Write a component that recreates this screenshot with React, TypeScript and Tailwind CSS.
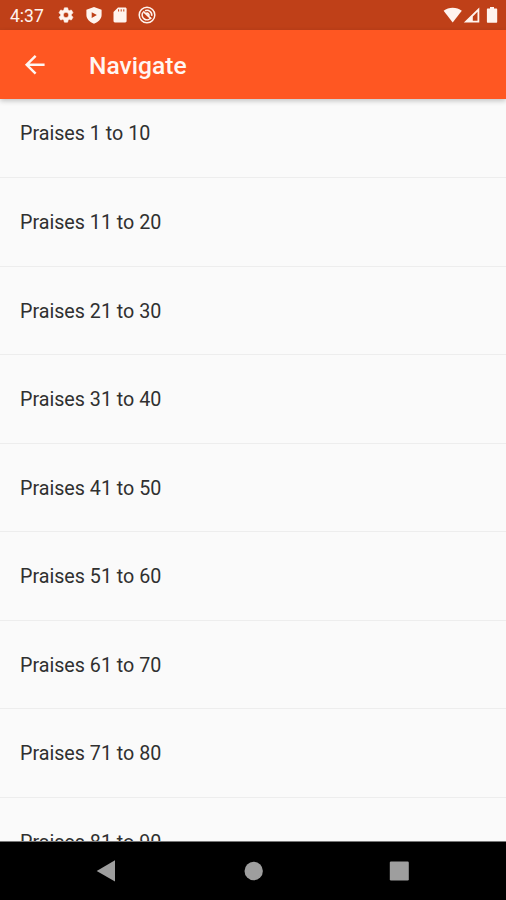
import { MdArrowBack } from "react-icons/md";

const praises = Array.from({ length: 9 }, (_, i) => {
  return `Praises ${i * 10 + 1} to ${i * 10 + 10}`;
});

function GearIcon() {
  return (
    <svg
      className="size-[18px]"
      viewBox="0 0 24 24"
      fill="currentColor"
      stroke="currentColor"
      strokeWidth=".8"
    >
      <path d="M19.140 12.940c.040-.300.060-.610.060-.940 0-.320-.020-.640-.070-.940l2.030-1.580c.180-.140.230-.410.120-.610l-1.920-3.320c-.120-.220-.370-.290-.590-.220l-2.390.960c-.500-.380-1.030-.700-1.620-.940l-.360-2.540c-.040-.240-.240-.410-.480-.410h-3.840c-.240 0-.430.170-.470.410l-.360 2.540c-.590.240-1.130.570-1.620.940l-2.390-.960c-.220-.080-.470 0-.590.220L2.740 8.870c-.120.210-.080.470.120.610l2.030 1.580c-.050.300-.090.630-.090.940s.020.640.070.940l-2.030 1.580c-.180.140-.230.410-.120.610l1.920 3.320c.120.220.370.290.590.220l2.390-.960c.500.380 1.030.700 1.620.940l.360 2.540c.050.240.240.410.480.410h3.840c.240 0 .440-.170.470-.410l.360-2.540c.590-.240 1.130-.560 1.620-.940l2.390.960c.220.080.470 0 .590-.220l1.920-3.320c.120-.220.070-.470-.120-.610l-2.010-1.580zM12 15.600c-1.980 0-3.600-1.620-3.600-3.600s1.620-3.600 3.600-3.600 3.600 1.620 3.600 3.600-1.620 3.600-3.600 3.600z" />
    </svg>
  );
}

function ShieldIcon() {
  return (
    <svg className="w-4 h-[17px]" viewBox="0 0 16 17" fill="currentColor">
      <path
        fillRule="evenodd"
        d="M8 0 .4 2.700v5.400c0 4 3.200 7.200 7.600 8.700 4.400-1.500 7.600-4.700 7.600-8.700V2.700zM5.700 5.300v5.600L10.900 8.100z"
      />
    </svg>
  );
}

function SdCardIcon() {
  return (
    <svg className="w-[14px] h-4" viewBox="0 0 14 16" fill="currentColor">
      <path d="M5 .5h7.200c.8 0 1.400.6 1.400 1.400v12.200c0 .8-.6 1.400-1.400 1.400H1.900c-.8 0-1.400-.6-1.400-1.400V5z" />
      <path
        d="M5.600 2.300v2.200M8.200 2.300v2.200M10.800 2.300v2.200"
        stroke="#bf4018"
        strokeWidth="1"
      />
    </svg>
  );
}

function DebugIcon() {
  return (
    <svg
      className="size-[18px]"
      viewBox="0 0 18 18"
      fill="none"
      stroke="currentColor"
    >
      <circle cx="9" cy="9" r="7.800" strokeWidth="1.500" />
      <path
        d="M4.900 6.300A4.800 4.800 0 1 0 13 11.600M7 4.700a4.800 4.800 0 0 1 6.700 5.200"
        strokeWidth="1.500"
      />
      <path
        d="m5.200 5.300 8 7.500M8.300 7.300a2 2 0 0 1 2.600 2.500"
        strokeWidth="1.600"
      />
    </svg>
  );
}

function StatusBar() {
  return (
    <div className="h-[30px] shrink-0 bg-[#bf4018] text-[#fff4ef] flex items-center">
      <span className="ml-[10px] w-[47px] text-[17.500px] leading-[30px] pt-[1px]">
        4:37
      </span>
      <GearIcon />
      <div className="ml-[10.500px]">
        <ShieldIcon />
      </div>
      <div className="ml-[11.500px]">
        <SdCardIcon />
      </div>
      <div className="ml-[11px]">
        <DebugIcon />
      </div>
      <svg
        className="ml-auto mr-[7px] w-[56px] h-[18px]"
        viewBox="0 0 56 18"
        fill="currentColor"
      >
        <path d="M.6 4.800C5.600.7 13.800.7 18.800 4.800L9.700 16.500z" />
        <path
          fillRule="evenodd"
          d="M36.300 1.500v15H20.800zM34.500 5.800 29.800 10.500v4.300h4.700z"
        />
        <path d="M47 2.500V1.100h4v1.400h2.200c.6 0 1 .4 1 1v12.200c0 .6-.4 1-1 1h-8.300c-.6 0-1-.4-1-1V3.500c0-.6.4-1 1-1z" />
      </svg>
    </div>
  );
}

function NavigationBar() {
  return (
    <div className="h-[59px] shrink-0 bg-black border-t border-[#777777]">
      <svg className="w-full h-[58px]" viewBox="0 0 506 58" fill="#9e9e9e">
        <path d="M96.700 29 115 18.300v21.300z" />
        <circle cx="253.700" cy="29" r="9.200" />
        <rect x="389.800" y="19.500" width="19" height="19" rx="1.200" />
      </svg>
    </div>
  );
}

function App() {
  return (
    <div className="w-full h-screen flex flex-col overflow-hidden bg-[#fafafa] font-['Roboto',sans-serif]">
      <StatusBar />
      <header className="relative z-10 h-[69px] shrink-0 bg-[#ff5722] text-[#fff6f2] flex items-center shadow-[0_2px_5px_rgba(0,0,0,0.22)]">
        <MdArrowBack className="ml-5 size-[29.500px]" />
        <h1 className="ml-[39.500px] pt-[3px] text-[24.600px] font-medium">
          Navigate
        </h1>
      </header>
      <main className="flex-1 min-h-0 overflow-hidden">
        <ul className="-mt-[9.700px]">
          {praises.map((praise) => (
            <li
              key={praise}
              className="h-[88.600px] pl-[20px] pt-[2px] flex items-center border-b border-[#ededed] text-[19.700px] text-[#303030]"
            >
              {praise}
            </li>
          ))}
        </ul>
      </main>
      <NavigationBar />
    </div>
  );
}

export default App;
